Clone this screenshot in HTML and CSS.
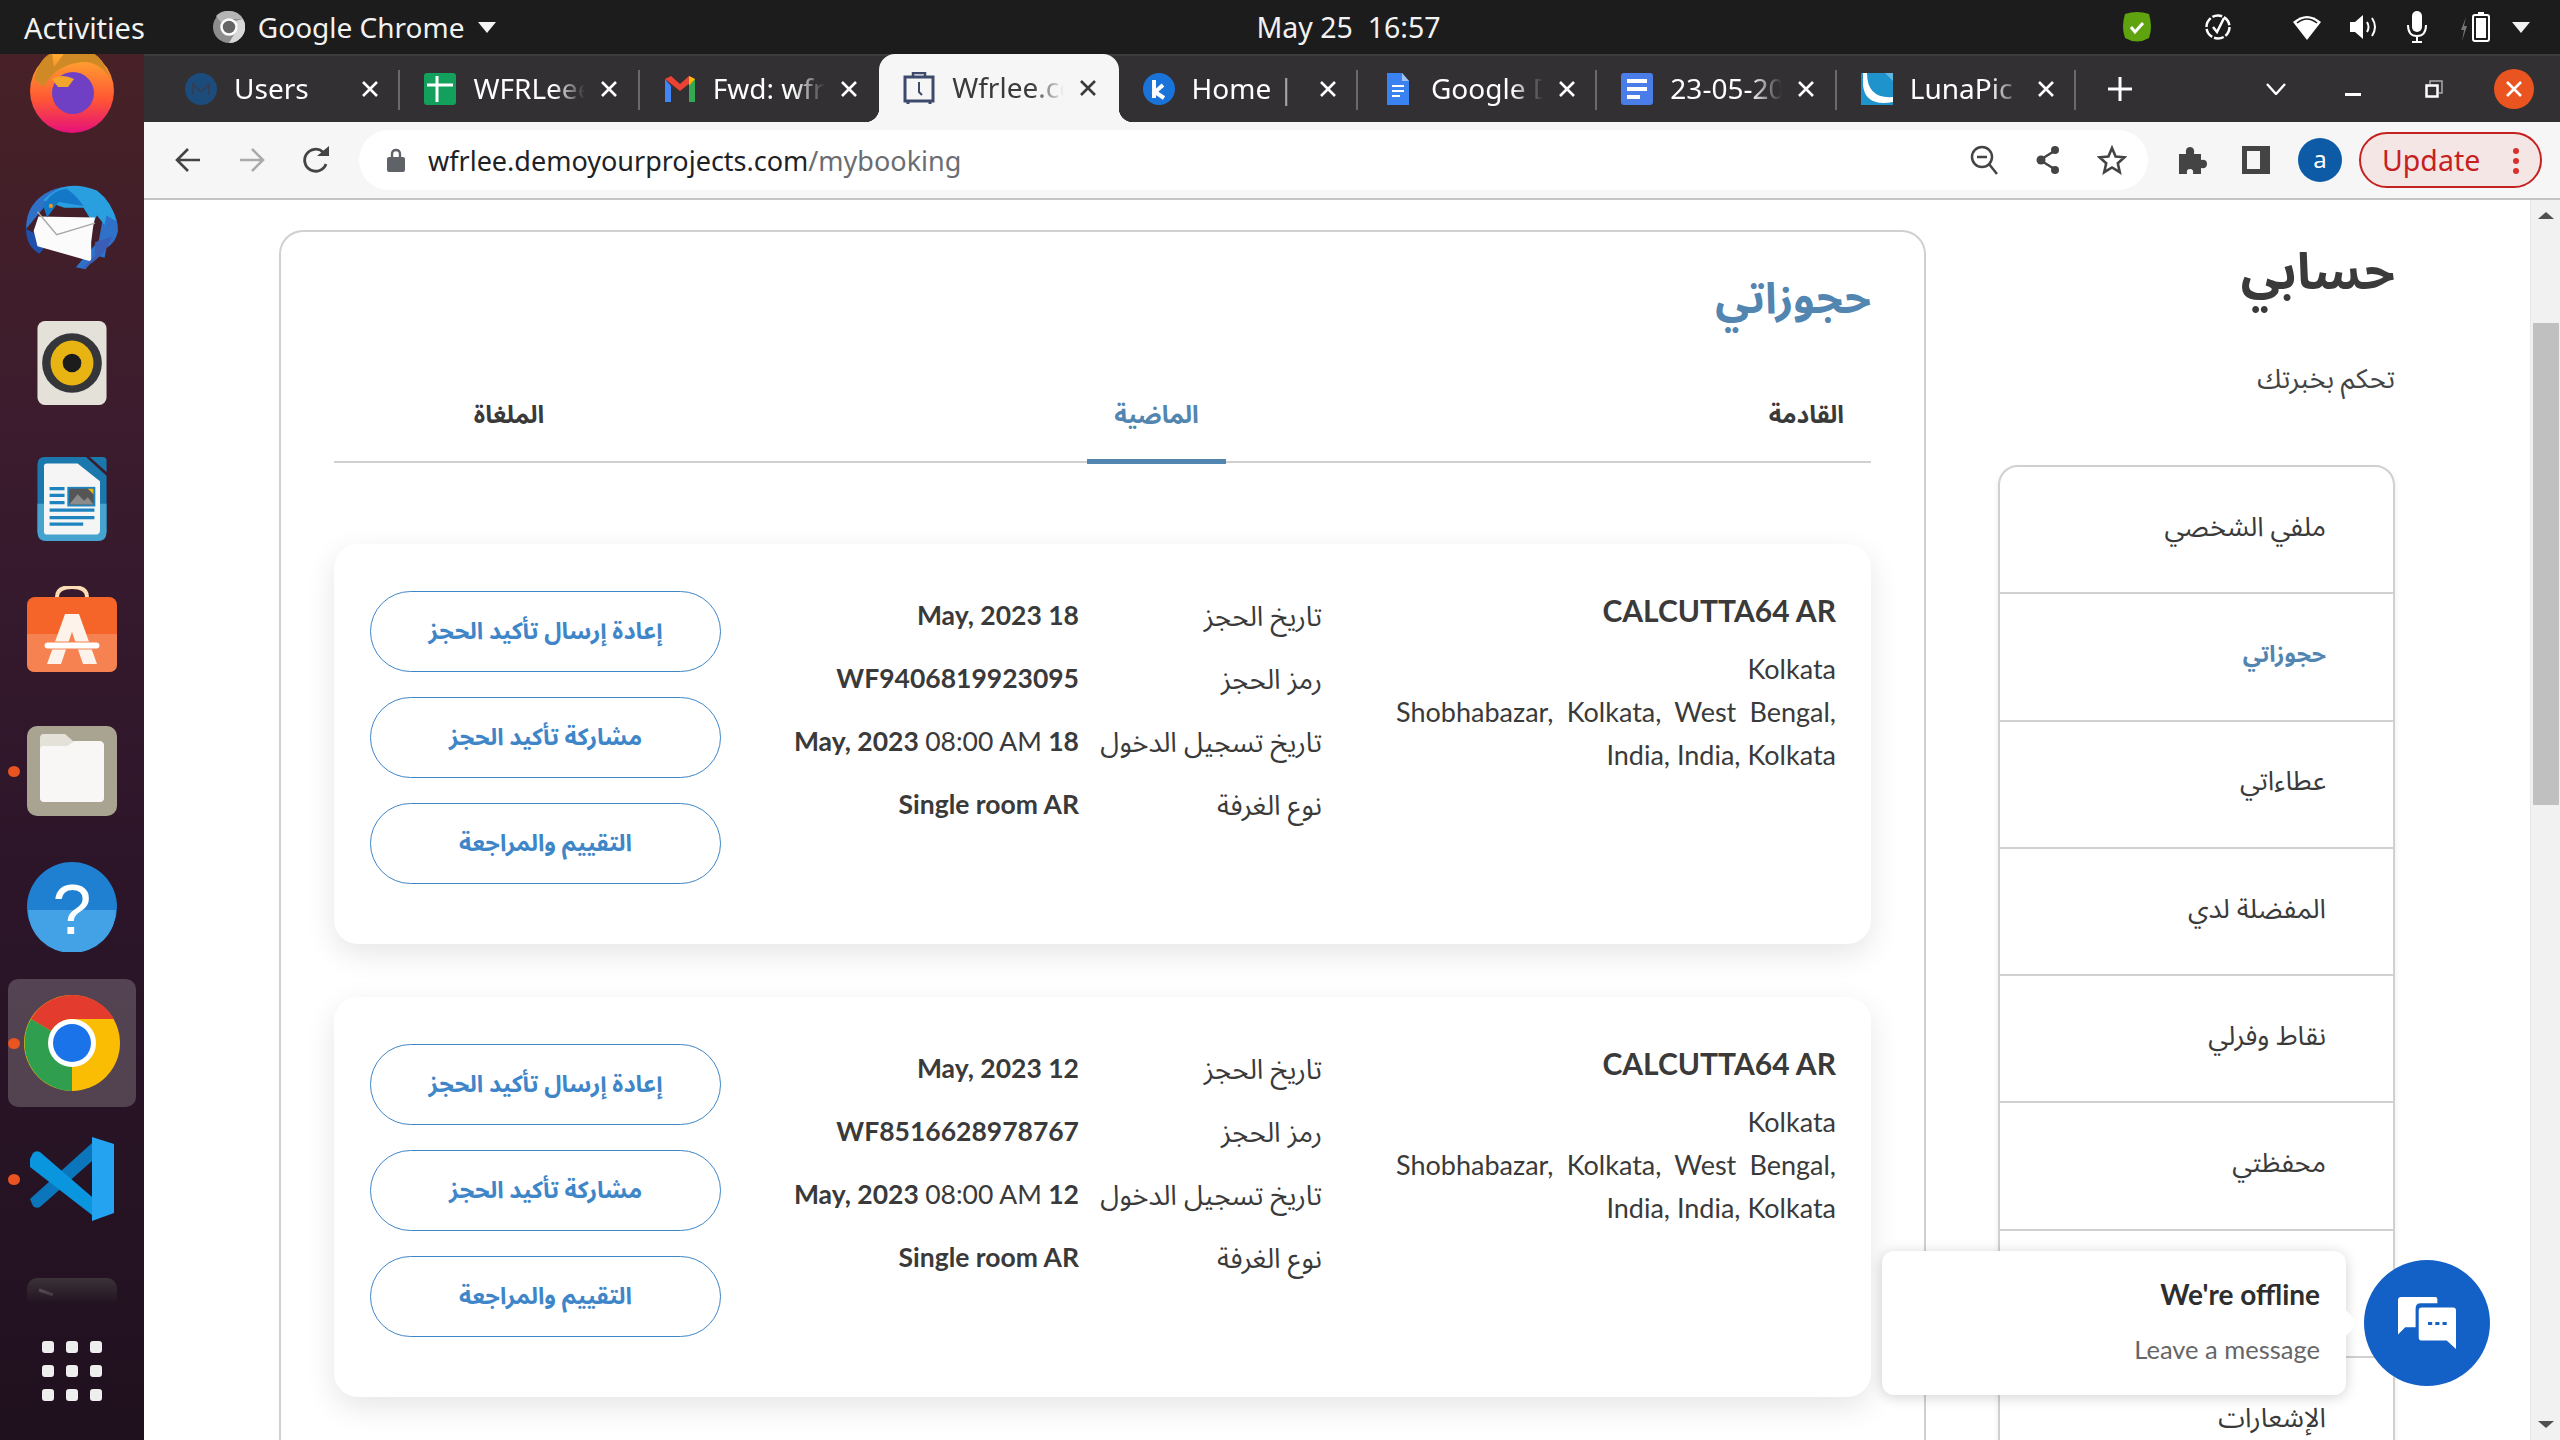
FILE: index.html
```html
<!DOCTYPE html>
<html lang="ar">
<head>
<meta charset="utf-8">
<title>Wfrlee</title>
<link rel="stylesheet" href="styles.css">
</head>
<body>
<svg class="defs" width="0" height="0" aria-hidden="true">
  <symbol id="x" viewBox="0 0 18 18"><path d="M2 2 16 16M16 2 2 16" stroke="currentColor" stroke-width="2.6" fill="none"/></symbol>
</svg>

<header class="topbar">
  <div class="top-left">
    <span class="activities">Activities</span>
    <span class="appname">
      <svg class="ic-32" viewBox="0 0 32 32"><circle cx="16" cy="16" r="16" fill="#8d8d8d"/><path d="M16 0A16 16 0 0 1 30 8H16A8 8 0 0 0 8.500 12L3 5A16 16 0 0 1 16 0Z" fill="#b5b5b5"/><path d="M30 8A16 16 0 0 1 16 32L23 20A8 8 0 0 0 22 10Z" fill="#d8d8d8"/><circle cx="16" cy="16" r="7.500" fill="#666" stroke="#fff" stroke-width="2.500"/></svg>
      <span>Google Chrome</span>
      <i class="tri-down"></i>
    </span>
  </div>
  <div class="clock">May 25&nbsp;&nbsp;16:57</div>
  <div class="tray">
    <svg class="tray-shield" viewBox="0 0 30 32"><path d="M3 3Q15-1 27 3Q31 16 27 27Q15 34 3 27Q-1 16 3 3Z" fill="#5fa40f"/><path d="M9 16l4 5 8-9" stroke="#fff" stroke-width="3" fill="none"/></svg>
    <svg class="tray-timer" viewBox="0 0 28 28"><circle cx="14" cy="14" r="11.500" fill="none" stroke="#fff" stroke-width="2.500" stroke-dasharray="10 2"/><path d="M9 14l4 5 7-14" stroke="#fff" stroke-width="2.500" fill="none"/></svg>
    <svg class="tray-wifi" viewBox="0 0 30 28"><path d="M15 27 1 9Q15-3 29 9Z" fill="#fff"/><path d="M5 10Q15 2 25 10" stroke="#1c1c1c" stroke-width="1.500" fill="none"/></svg>
    <svg class="tray-vol" viewBox="0 0 29 26"><path d="M1 8H6L14 1V25L6 18H1Z" fill="#fff"/><path d="M18 8Q21 13 18 18M23 4Q29 13 23 22" stroke="#fff" stroke-width="2" fill="none"/></svg>
    <svg class="tray-mic" viewBox="0 0 22 32"><rect x="6" y="0" width="10" height="21" rx="5" fill="#fff"/><path d="M2 14Q2 25 11 25Q20 25 20 14M11 25V31M6 31H16" stroke="#fff" stroke-width="2" fill="none"/></svg>
    <svg class="tray-bat" viewBox="0 0 30 30"><path d="M6 5 1 18H4L2 29 7 14H4Z" fill="#777"/><path d="M18 0h6v2h-6z" fill="#fff"/><rect x="13" y="3" width="16" height="26" rx="2" fill="none" stroke="#fff" stroke-width="2"/><rect x="16" y="6" width="10" height="20" fill="#fff"/></svg>
    <i class="tri-down"></i>
  </div>
</header>

<div class="desktop">
  <aside class="dock">
    <div class="dock-apps">
      <div class="slot">
        <svg class="dock-ic" viewBox="0 0 84 84"><defs><linearGradient id="ff" x1="0" y1="0" x2="0" y2="1"><stop offset="0" stop-color="#ffb52f"/><stop offset=".6" stop-color="#ff5634"/><stop offset="1" stop-color="#e6107b"/></linearGradient></defs><circle cx="42" cy="42" r="42" fill="url(#ff)"/><path d="M4 30Q10 8 22 4L24 18 36 2Q60-4 72 12L84 36Q70 8 46 14 24 18 14 38Z" fill="#d08a25"/><circle cx="43" cy="44" r="21" fill="#6f3fc4"/><path d="M22 30Q32 24 44 30L38 38 28 38Z" fill="#f2a52b"/></svg>
      </div>
      <div class="slot">
        <svg class="dock-ic wide" viewBox="0 0 96 92"><path d="M0 48Q0 20 26 8 50-2 74 12 96 26 96 50 94 62 84 68L82 78 74 76 62 90 52 88 76 60 80 38 60 16 30 12Z" fill="#2f70c8"/><path d="M0 48Q0 66 14 74L24 62 8 52Z" fill="#1f4fa8"/><path d="M18 18Q40-6 74 8 90 20 94 40L84 34 82 44 74 34 70 42 60 26 40 26Z" fill="#2a9fe0"/><path d="M13 35 72 36 70 46 68 62 68 82 12 66 8 50Z" fill="#fbfbfb"/><path d="M12 30 32 54 72 42" stroke="#a8a8a8" stroke-width="1.500" fill="none"/><path d="M18 24Q26 8 42 6 50 10 60 24L34 20 22 36Z" fill="#1378c8"/><circle cx="26" cy="24" r="2.200" fill="#e39a20"/><path d="M72 62 90 56Q82 78 58 90L72 76Z" fill="#3a5db6"/></svg>
      </div>
      <div class="slot">
        <svg class="dock-ic" viewBox="0 0 74 90"><rect width="74" height="90" rx="8" fill="#e4e1d9"/><ellipse cx="37" cy="45" rx="32" ry="32" fill="#34363a"/><ellipse cx="37" cy="45" rx="23" ry="24" fill="#e7b414"/><ellipse cx="37" cy="45" rx="10" ry="10" fill="#1c1c1c"/></svg>
      </div>
      <div class="slot">
        <svg class="dock-ic" viewBox="0 0 74 90"><path d="M8 0H52L74 20V80Q74 90 64 90H10Q0 90 0 80V8Q0 0 8 0Z" fill="#1b78ac"/><path d="M0 50H74V80Q74 90 64 90H10Q0 90 0 80Z" fill="#46a3cf"/><path d="M56 0H70Q74 0 74 4V16Z" fill="#1b78ac"/><path d="M7 10Q7 7 10 7H43L67 26V78Q67 83 63 83H10Q7 83 7 80Z" fill="#f5f5f5"/><path d="M13 34H29M13 41H29M13 49H29M13 57H61M13 65H61M13 72H49" stroke="#1e84bf" stroke-width="3.500"/><rect x="33" y="33" width="28" height="19" fill="#555" stroke="#1e84bf" stroke-width="2"/><path d="M34 51 43 40 50 47 54 43 60 51Z" fill="#8b8b8b"/><path d="M54 34H60V40Z" fill="#e9b416"/></svg>
      </div>
      <div class="slot">
        <svg class="dock-ic bag" viewBox="0 0 90 86"><path d="M30 11Q30 1 45 1Q60 1 60 11" stroke="#fbdcb4" stroke-width="4" fill="none"/><rect y="11" width="90" height="75" rx="8" fill="#f5652a"/><path d="M0 48H90V78Q90 86 82 86H8Q0 86 0 78Z" fill="#f58250"/><path d="M20 78 38 28H52L70 78H56L45 46 34 78Z" fill="#fdf3ea"/><rect x="17" y="56" width="56" height="7" rx="3.500" fill="#fff" stroke="#f58250"/></svg>
      </div>
      <div class="slot">
        <svg class="dock-ic wide" viewBox="0 0 90 90"><rect width="90" height="90" rx="10" fill="#a9a392"/><path d="M13 12Q13 8 17 8H38L46 15H70Q77 15 77 20V72Q77 76 72 76H18Q13 76 13 72Z" fill="#e4e1d9"/><path d="M13 24Q13 20 17 20H40L48 15H72Q77 15 77 20V72Q77 76 72 76H18Q13 76 13 72Z" fill="#f8f7f5"/></svg>
        <i class="dot"></i>
      </div>
      <div class="slot">
        <svg class="dock-ic wide" viewBox="0 0 90 90"><circle cx="45" cy="45" r="45" fill="#1f7fd0"/><path d="M1 48H89A44 43 0 0 1 1 48Z" fill="#42a2e5"/><text x="45" y="72" class="help-q">?</text></svg>
      </div>
      <div class="slot active">
        <svg class="dock-ic chrome" viewBox="0 0 96 96"><circle cx="48" cy="48" r="48" fill="#fbbc04"/><path d="M48 0A48 48 0 0 1 90 24H48A24 24 0 0 0 27 36L7 24A48 48 0 0 1 48 0Z" fill="#e33b2e"/><path d="M7 24 27 36 48 72 48 96A48 48 0 0 1 7 24Z" fill="#2f9e4f"/><circle cx="48" cy="48" r="24" fill="#fff"/><circle cx="48" cy="48" r="19" fill="#1a73e8"/></svg>
        <i class="dot"></i>
      </div>
      <div class="slot">
        <svg class="dock-ic" viewBox="0 0 84 84"><path d="M0 62 62 6V24L10 70Q6 72 3 69Z" fill="#0b76bc"/><path d="M0 22 3 16Q6 13 10 15L62 60V78L0 30Z" fill="#0a95df"/><path d="M62 0 84 7V76L62 84Z" fill="#24a4f0"/></svg>
        <i class="dot"></i>
      </div>
      <div class="slot fading">
        <svg class="dock-ic wide" viewBox="0 0 90 90"><rect width="90" height="90" rx="10" fill="#3b3338"/><path d="M12 12 26 17" stroke="#857c82" stroke-width="3"/></svg>
      </div>
    </div>
    <div class="show-apps">
      <i></i><i></i><i></i><i></i><i></i><i></i><i></i><i></i><i></i>
    </div>
  </aside>

  <div class="browser">
    <nav class="tabstrip">
      <div class="tab sep">
        <svg class="fav" viewBox="0 0 32 32"><circle cx="16" cy="16" r="16" fill="#1c4c7c"/><path d="M8 22V11L16 19 24 11V22" stroke="#3a3a4a" stroke-width="1.500" fill="none"/></svg>
        <span class="tab-title">Users</span>
        <svg class="tab-x"><use href="#x"/></svg>
      </div>
      <div class="tab sep">
        <svg class="fav" viewBox="0 0 32 32"><rect width="32" height="32" rx="3" fill="#12a05c"/><path d="M3 12H29M13 3V29" stroke="#fff" stroke-width="3"/></svg>
        <span class="tab-title">WFRLeeeeee</span>
        <svg class="tab-x"><use href="#x"/></svg>
      </div>
      <div class="tab before-active">
        <svg class="fav" viewBox="0 0 32 32"><path d="M1 6V29H7V13Z" fill="#4285f4"/><path d="M31 6V29H25V13Z" fill="#34a853"/><path d="M1 6 16 18 31 6 25 3 16 11 7 3Z" fill="#ea4335"/><path d="M25 3 31 6 25 13Z" fill="#fbbc04"/></svg>
        <span class="tab-title">Fwd: wfrlee</span>
        <svg class="tab-x"><use href="#x"/></svg>
      </div>
      <div class="tab current">
        <svg class="fav" viewBox="0 0 32 32"><path d="M10 5V1H22V5" stroke="#3d4a6b" stroke-width="2.500" fill="none"/><rect x="2" y="5" width="28" height="24" fill="none" stroke="#3d4a6b" stroke-width="3"/><path d="M16 10V20L19 23" stroke="#3d4a6b" stroke-width="2" fill="none"/><path d="M5 29V32M27 29V32" stroke="#3d4a6b" stroke-width="3"/></svg>
        <span class="tab-title">Wfrlee.com</span>
        <svg class="tab-x"><use href="#x"/></svg>
      </div>
      <div class="tab sep">
        <svg class="fav" viewBox="0 0 32 32"><circle cx="16" cy="16" r="16" fill="#1a73d8"/><path d="M11 7V25M20 12 12 19 21 25" stroke="#fff" stroke-width="4" fill="none"/></svg>
        <span class="tab-title">Home | Dashboard</span>
        <svg class="tab-x"><use href="#x"/></svg>
      </div>
      <div class="tab sep">
        <svg class="fav" viewBox="0 0 32 32"><path d="M5 0H20L27 8V32H5Z" fill="#3b82f1"/><path d="M20 0V8H27Z" fill="#a4c2f4"/><path d="M10 13H22M10 18H22M10 23H18" stroke="#fff" stroke-width="2"/></svg>
        <span class="tab-title">Google Docs</span>
        <svg class="tab-x"><use href="#x"/></svg>
      </div>
      <div class="tab sep">
        <svg class="fav" viewBox="0 0 32 32"><rect width="32" height="32" rx="3" fill="#4a7de8"/><path d="M6 6H26V10H6ZM6 14H26V18H6ZM6 22H19V26H6Z" fill="#fff"/></svg>
        <span class="tab-title">23-05-2023</span>
        <svg class="tab-x"><use href="#x"/></svg>
      </div>
      <div class="tab sep">
        <svg class="fav" viewBox="0 0 32 32"><rect width="32" height="32" fill="#1f93cb"/><path d="M24 0H32V8Z" fill="#62b6de"/><path d="M6 0Q6 26 32 24V29Q4 34 2 12V0Z" fill="#fff"/></svg>
        <span class="tab-title">LunaPic</span>
        <svg class="tab-x"><use href="#x"/></svg>
      </div>
      <svg class="newtab" viewBox="0 0 24 24"><path d="M12 0V24M0 12H24" stroke="#fff" stroke-width="3"/></svg>
      <svg class="chev" viewBox="0 0 20 12"><path d="M1 1 10 11 19 1" stroke="#fff" stroke-width="2.400" fill="none"/></svg>
      <span class="win-min"></span>
      <svg class="win-res" viewBox="0 0 18 18"><path d="M5 4V1H17V13H14" stroke="#aaa" stroke-width="1.500" fill="none"/><rect x="1.500" y="5.500" width="11" height="11" fill="none" stroke="#fff" stroke-width="2.500"/></svg>
      <span class="win-close"><svg viewBox="0 0 18 18"><use href="#x"/></svg></span>
    </nav>

    <div class="toolbar">
      <svg class="nav-ic" viewBox="0 0 26 26"><path d="M25 13H3M13 2 2 13 13 24" stroke="#444" stroke-width="2.600" fill="none"/></svg>
      <svg class="nav-ic fwd" viewBox="0 0 26 26"><path d="M1 13H23M13 2 24 13 13 24" stroke="#aaa" stroke-width="2.600" fill="none"/></svg>
      <svg class="nav-ic reload" viewBox="0 0 28 28"><path d="M24 18A11 11 0 1 1 21 6" stroke="#444" stroke-width="2.800" fill="none"/><path d="M15 10H27V0Z" fill="#444"/></svg>
      <div class="omnibox">
        <svg class="lock" viewBox="0 0 18 24"><path d="M5 10V6Q5 2 9 2Q13 2 13 6V10" stroke="#5f6368" stroke-width="2.400" fill="none"/><rect y="9" width="18" height="15" rx="2" fill="#5f6368"/></svg>
        <span class="url">wfrlee.demoyourprojects.com<span class="url-path">/mybooking</span></span>
        <svg class="omni-ic" viewBox="0 0 28 30"><circle cx="12" cy="12" r="10" fill="none" stroke="#444" stroke-width="2.500"/><path d="M7 12H17M19 19 27 29" stroke="#444" stroke-width="2.500"/></svg>
        <svg class="omni-ic share" viewBox="0 0 24 28"><path d="M20 4 4 14 20 24" stroke="#444" stroke-width="2.400" fill="none"/><circle cx="19" cy="4" r="4" fill="#444"/><circle cx="5" cy="14" r="4.500" fill="#444"/><circle cx="19" cy="24" r="4" fill="#444"/></svg>
        <svg class="omni-ic star" viewBox="0 0 30 30"><path d="M15 3 18.600 11.500 27.500 12.300 20.800 18.300 22.800 27.200 15 22.500 7.200 27.200 9.200 18.300 2.500 12.300 11.400 11.500Z" fill="none" stroke="#444" stroke-width="2.600"/></svg>
      </div>
      <svg class="tool-ic" viewBox="0 0 30 28"><path d="M2 8H9Q8 1 13 1Q18 1 17 8H24V14Q30 13 30 18Q30 23 24 22V28H16Q17 23 13 23Q9 23 10 28H2Z" fill="#444"/></svg>
      <svg class="tool-side" viewBox="0 0 28 28"><rect width="28" height="28" fill="#444"/><rect x="5" y="5" width="13" height="18" fill="#f6f6f6"/></svg>
      <span class="avatar">a</span>
      <span class="update"><span>Update</span><i class="dots"></i></span>
    </div>

    <div class="viewport">
      <main class="page" dir="rtl">
        <aside class="sidebar">
          <h2 class="side-title">حسابي</h2>
          <p class="side-sub">تحكم بخبرتك</p>
          <ul class="menu">
            <li>ملفي الشخصي</li>
            <li class="on">حجوزاتي</li>
            <li>عطاءاتي</li>
            <li>المفضلة لدي</li>
            <li>نقاط وفرلي</li>
            <li>محفظتي</li>
            <li>رسائلي</li>
            <li>الإشعارات</li>
          </ul>
        </aside>
        <section class="panel">
          <h1 class="panel-title">حجوزاتي</h1>
          <div class="tabs">
            <span class="tb">القادمة</span>
            <span class="tb on">الماضية</span>
            <span class="tb">الملغاة</span>
          </div>
          <article class="booking">
            <div class="hotel">
              <h3>CALCUTTA64 AR</h3>
              <p>Kolkata<br>Shobhabazar, Kolkata, West Bengal, India, India, Kolkata</p>
            </div>
            <dl class="facts">
              <dt>تاريخ الحجز</dt><dd>18 May, 2023</dd>
              <dt>رمز الحجز</dt><dd>WF9406819923095</dd>
              <dt>تاريخ تسجيل الدخول</dt><dd>18 May, 2023 <span class="time">08:00 AM</span></dd>
              <dt>نوع الغرفة</dt><dd>Single room AR</dd>
            </dl>
            <div class="actions">
              <a class="btn">إعادة إرسال تأكيد الحجز</a>
              <a class="btn">مشاركة تأكيد الحجز</a>
              <a class="btn">التقييم والمراجعة</a>
            </div>
          </article>
          <article class="booking">
            <div class="hotel">
              <h3>CALCUTTA64 AR</h3>
              <p>Kolkata<br>Shobhabazar, Kolkata, West Bengal, India, India, Kolkata</p>
            </div>
            <dl class="facts">
              <dt>تاريخ الحجز</dt><dd>12 May, 2023</dd>
              <dt>رمز الحجز</dt><dd>WF8516628978767</dd>
              <dt>تاريخ تسجيل الدخول</dt><dd>12 May, 2023 <span class="time">08:00 AM</span></dd>
              <dt>نوع الغرفة</dt><dd>Single room AR</dd>
            </dl>
            <div class="actions">
              <a class="btn">إعادة إرسال تأكيد الحجز</a>
              <a class="btn">مشاركة تأكيد الحجز</a>
              <a class="btn">التقييم والمراجعة</a>
            </div>
          </article>
        </section>
      </main>
      <div class="chat">
        <div class="chat-pop">
          <strong>We're offline</strong>
          <span>Leave a message</span>
        </div>
        <div class="chat-btn">
          <svg viewBox="0 0 56 50"><path d="M3 0H36Q38 0 38 2V6H22Q17 6 17 11V29H7L0 36V3Q0 0 3 0Z" fill="#fff"/><path d="M23 10H53Q56 10 56 13V38V50L47 42H23Q20 42 20 39V13Q20 10 23 10Z" fill="#fff"/><path d="M29 24h4v3h-4zM36 24h4v3h-4zM43 24h4v3h-4z" fill="#1360c6"/></svg>
        </div>
      </div>
      <div class="scrollbar">
        <i class="sb-up"></i>
        <div class="sb-thumb"></div>
        <i class="sb-down"></i>
      </div>
    </div>
  </div>
</div>
</body>
</html>
```

FILE: styles.css
```css
* { box-sizing: border-box; }
html, body { margin: 0; padding: 0; width: 2560px; height: 1440px; overflow: hidden; }
body { font-family: "Noto Sans", "DejaVu Sans", sans-serif; background: #fff; color: #3a3a3a; display: flex; flex-direction: column; }
.defs { position: absolute; }
i { display: block; }

/* top bar */
.topbar { height: 54px; flex: none; background: #1c1c1c; color: #f2f2f2; display: grid; grid-template-columns: 1fr auto 1fr; align-items: center; padding: 0 30px 0 24px; font-size: 28.500px; position: relative; z-index: 3; }
.activities { font-size: 29px; }
.top-left { display: flex; align-items: center; gap: 68px; }
.appname { display: flex; align-items: center; gap: 13px; font-size: 28px; }
.ic-32 { width: 32px; height: 32px; }
.tri-down { width: 0; height: 0; border-left: 9px solid transparent; border-right: 9px solid transparent; border-top: 11px solid #f2f2f2; }
.clock { margin-left: 143px; }
.tray { display: flex; align-items: center; justify-content: flex-end; }
.tray-shield { width: 30px; height: 32px; margin-right: 52px; }
.tray-timer { width: 28px; height: 28px; margin-right: 60px; }
.tray-wifi { width: 30px; height: 28px; margin-right: 27px; }
.tray-vol { width: 29px; height: 26px; margin-right: 28px; }
.tray-mic { width: 22px; height: 32px; margin-right: 32px; }
.tray-bat { width: 30px; height: 30px; margin-right: 22px; }

.desktop { flex: 1; display: flex; min-height: 0; }

/* dock */
.dock { width: 144px; flex: none; display: flex; flex-direction: column; background: linear-gradient(180deg, #472126 0%, #3a1b2e 30%, #2c1529 60%, #20111f 100%); overflow: hidden; }
.dock-apps { height: 1250px; flex: none; overflow: hidden; }
.slot { height: 136px; display: flex; align-items: center; justify-content: center; position: relative; }
.slot:first-child { margin-top: -31px; }
.dock-ic { width: 84px; height: 84px; }
.dock-ic.wide { width: 92px; height: 90px; }
.dock-ic.bag { width: 90px; height: 86px; margin-top: -12px; }
.dock-ic.chrome { width: 96px; height: 96px; }
.slot.active::before { content: ""; position: absolute; left: 8px; right: 8px; top: 4px; bottom: 4px; background: rgba(255,255,255,.2); border-radius: 10px; }
.slot svg { position: relative; }
.slot.fading svg { margin-top: 16px; -webkit-mask-image: linear-gradient(#000, transparent 26px); mask-image: linear-gradient(#000, transparent 26px); }
.dot { position: absolute; left: 8px; top: 50%; width: 12px; height: 11px; margin-top: -5px; border-radius: 50%; background: #e95420; }
.help-q { font-family: "Liberation Sans", sans-serif; font-size: 70px; fill: #fff; text-anchor: middle; }
.show-apps { display: grid; grid-template-columns: repeat(3, 12px); grid-auto-rows: 12px; gap: 12px; justify-content: center; padding-top: 37px; }
.show-apps i { background: #eee; border-radius: 3px; }

.browser { flex: 1; min-width: 0; display: flex; flex-direction: column; }

/* tabs */
.tabstrip { height: 68px; flex: none; display: flex; align-items: stretch; padding-left: 17px; background: #323032; border-top: 2px solid #3e3c3e; color: #fff; }
.tab { width: 239.400px; flex: none; display: flex; align-items: center; padding-left: 24px; position: relative; font-size: 28px; }
.tab.sep::after { content: ""; position: absolute; right: 0; top: 14px; height: 40px; width: 2px; background: #6b696b; }
.fav { width: 32px; height: 32px; flex: none; }
.tab-title { width: 112px; margin-left: 17px; padding-bottom: 3px; white-space: nowrap; overflow: hidden; -webkit-mask-image: linear-gradient(90deg, #000 72%, transparent 100%); mask-image: linear-gradient(90deg, #000 72%, transparent 100%); }
.tab-x { width: 18px; height: 18px; margin-left: 15px; color: #fff; flex: none; }
.tab.current { background: #f6f6f6; color: #3a3a3a; border-radius: 16px 16px 0 0; margin-top: -2px; }
.tab.current .tab-x { color: #3a3a3a; }
.tab.current::before, .tab.current::after { content: ""; position: absolute; bottom: 0; width: 14px; height: 14px; }
.tab.current::before { left: -14px; background: radial-gradient(circle at 0 0, transparent 14px, #f6f6f6 14.500px); }
.tab.current::after { right: -14px; background: radial-gradient(circle at 100% 0, transparent 14px, #f6f6f6 14.500px); }
.newtab { width: 24px; height: 24px; align-self: center; margin-left: 32px; }
.chev { width: 20px; height: 12px; align-self: center; margin-left: 134px; }
.win-min { width: 16px; height: 3px; background: #fff; align-self: center; margin: 10px 0 0 59px; }
.win-res { width: 18px; height: 18px; align-self: center; margin-left: 64px; }
.win-close { width: 40px; height: 40px; border-radius: 50%; background: #e95420; align-self: center; margin-left: 51px; display: flex; align-items: center; justify-content: center; color: #fff; }
.win-close svg { width: 18px; height: 18px; }

/* toolbar */
.toolbar { height: 78px; flex: none; display: flex; align-items: center; background: #f6f6f6; border-bottom: 2px solid #c4c4c4; padding: 0 0 0 31px; }
.nav-ic { width: 26px; height: 26px; flex: none; }
.nav-ic.fwd { margin-left: 38px; }
.nav-ic.reload { width: 28px; height: 28px; margin-left: 37px; }
.omnibox { width: 1789px; height: 60px; margin-left: 29px; flex: none; background: #fff; border-radius: 30px; display: flex; align-items: center; padding-left: 28px; }
.lock { width: 18px; height: 24px; flex: none; }
.url { font-size: 27px; color: #202124; margin-left: 23px; width: 1542px; white-space: nowrap; }
.url-path { color: #6a6d72; }
.omni-ic { width: 28px; height: 30px; flex: none; }
.omni-ic.share { width: 24px; height: 28px; margin-left: 38px; }
.omni-ic.star { width: 30px; height: 30px; margin-left: 37px; }
.tool-ic { width: 30px; height: 28px; margin-left: 29px; flex: none; }
.tool-side { width: 28px; height: 28px; margin-left: 35px; flex: none; }
.avatar { width: 44px; height: 44px; margin-left: 28px; border-radius: 50%; background: #0d5aa7; color: #fff; display: flex; align-items: center; justify-content: center; font-size: 24px; padding-bottom: 4px; flex: none; }
.update { width: 183px; height: 56px; margin-left: 17px; border: 2px solid #c5221f; border-radius: 28px; background: #f5e6e6; color: #c5221f; display: flex; align-items: center; padding-left: 21px; font-size: 28.500px; flex: none; position: relative; }
.dots { width: 6px; height: 6px; border-radius: 50%; background: #d9302c; box-shadow: 0 -10px 0 #d9302c, 0 10px 0 #d9302c; position: absolute; right: 21px; top: 24px; }

/* viewport */
.viewport { flex: 1; min-height: 0; position: relative; display: flex; overflow: hidden; }
.page { flex: 1; min-width: 0; display: grid; grid-template-columns: 397px 1fr; column-gap: 72px; padding: 30px 135px 0; align-items: start; font-family: "Lato", "Noto Sans Arabic", "Noto Sans", "DejaVu Sans", sans-serif; }
.scrollbar { width: 30px; flex: none; background: #f1f1f1; display: flex; flex-direction: column; align-items: center; position: relative; border-left: 1px solid #e8e8e8; }
.sb-up { width: 0; height: 0; border-left: 8px solid transparent; border-right: 8px solid transparent; border-bottom: 7px solid #505050; margin-top: 12px; }
.sb-thumb { width: 26px; height: 482px; margin-top: 104px; background: #c0c0c0; }
.sb-down { width: 0; height: 0; border-left: 8px solid transparent; border-right: 8px solid transparent; border-top: 7px solid #505050; position: absolute; bottom: 12px; }

/* sidebar */
.side-title { margin: 0; font-size: 50px; line-height: 80px; font-weight: 700; color: #3a3a3a; }
.side-sub { margin: 48px 0 0; font-size: 27px; line-height: 40px; color: #444; }
.menu { list-style: none; margin: 67px 0 0; padding: 0; border: 2px solid #d0d0d0; border-radius: 20px; box-shadow: 0 3px 6px rgba(0,0,0,.08); }
.menu li { height: 127.300px; display: flex; align-items: center; padding: 0 67px 5px; font-size: 27px; color: #3a3a3a; border-bottom: 2px solid #d0d0d0; }
.menu li.on { color: #5285b0; font-weight: 700; font-size: 23px; }

/* panel */
.panel { border: 2px solid #d0d0d0; border-bottom: 0; border-radius: 24px 24px 0 0; padding: 0 53px; height: 1400px; }
.panel-title { margin: 27px 0 0; font-size: 43px; line-height: 76px; color: #5285b0; font-weight: 700; }
.tabs { display: flex; gap: 516px; margin-top: 60px; border-bottom: 2px solid #d0d0d0; height: 68px; }
.tb { padding: 0 27px; font-size: 24.500px; font-weight: 700; line-height: 38px; color: #3a3a3a; white-space: nowrap; height: 69px; }
.tb.on { color: #5285b0; border-bottom: 5px solid #5285b0; }

/* bookings */
.booking { height: 400px; margin-top: 81px; border-radius: 24px; background: #fff; box-shadow: 0 10px 30px rgba(0,0,0,.1); padding: 0 35px 0 36px; display: flex; align-items: flex-start; }
.booking + .booking { margin-top: 53px; }
.hotel { width: 440px; flex: none; padding-top: 45px; }
.hotel h3 { margin: 0; font-size: 30px; line-height: 42px; font-weight: 700; color: #3a3a3a; }
.hotel p { margin: 16px 0 0; font-size: 27px; line-height: 43px; color: #3a3a3a; text-align: justify; }
.facts { margin: 41px 74px 0 0; display: grid; grid-template-columns: 243px auto; grid-auto-rows: 63px; align-items: center; flex: none; }
.facts dt { font-size: 27.500px; color: #3a3a3a; white-space: nowrap; }
.facts dd { margin: 0; padding-bottom: 3px; font-size: 26.500px; font-weight: 700; color: #3a3a3a; white-space: nowrap; }
.time { font-weight: 400; }
.actions { margin: 47px auto 0 0; width: 351px; flex: none; display: flex; flex-direction: column; gap: 25px; }
.btn { height: 81px; border: 1.500px solid #3f86c9; border-radius: 41px; display: flex; align-items: center; justify-content: center; font-size: 23.500px; font-weight: 700; color: #3f86c9; }

/* chat */
.chat { position: absolute; right: 70px; bottom: 45px; display: flex; align-items: center; gap: 18px; z-index: 2; font-family: "Lato", sans-serif; }
.chat-pop { width: 464px; height: 144px; background: #fff; border-radius: 12px; box-shadow: 0 2px 14px rgba(0,0,0,.18); padding: 23px 26px 0; display: flex; flex-direction: column; align-items: flex-end; position: relative; }
.chat-pop::after { content: ""; position: absolute; right: -9px; top: 63px; width: 18px; height: 18px; background: #fff; transform: rotate(45deg); }
.chat-pop strong { font-size: 28px; line-height: 40px; color: #2e2e2e; }
.chat-pop span { font-size: 25.500px; line-height: 34px; margin-top: 18px; color: #666; }
.chat-btn { width: 126px; height: 126px; border-radius: 50%; background: #1360c6; display: flex; align-items: center; justify-content: center; }
.chat-btn svg { width: 58px; height: 52px; }
```
